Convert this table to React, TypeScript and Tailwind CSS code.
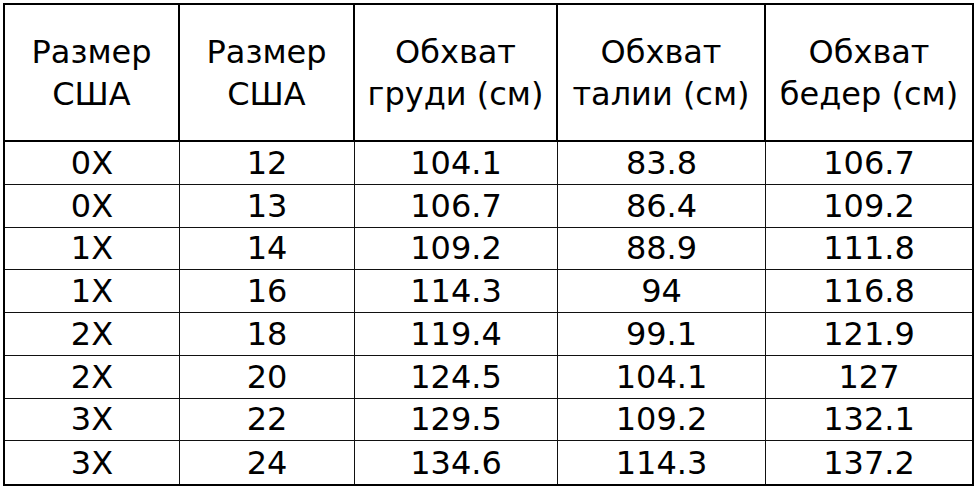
const headers = [
  ["Размер", "США"],
  ["Размер", "США"],
  ["Обхват", "груди (см)"],
  ["Обхват", "талии (см)"],
  ["Обхват", "бедер (см)"],
];

const rows = [
  ["0X", "12", "104.1", "83.8", "106.7"],
  ["0X", "13", "106.7", "86.4", "109.2"],
  ["1X", "14", "109.2", "88.9", "111.8"],
  ["1X", "16", "114.3", "94", "116.8"],
  ["2X", "18", "119.4", "99.1", "121.9"],
  ["2X", "20", "124.5", "104.1", "127"],
  ["3X", "22", "129.5", "109.2", "132.1"],
  ["3X", "24", "134.6", "114.3", "137.2"],
];

export default function App() {
  return (
    <div className="w-[976px] h-[487px] bg-white pl-[3px] pt-[3px] font-['DejaVu_Sans',sans-serif] text-black">
      <div className="w-[971px] h-[483px] border-2 border-black flex flex-col">
        {/* Header */}
        <div className="grid grid-cols-[175px_175px_203px_208px_1fr] h-[138px] border-b-2 border-black">
          {headers.map((h, i) => (
            <div
              key={i}
              className={`flex flex-col items-center justify-center text-[32px] leading-[42px] whitespace-nowrap ${
                i < 4 ? "border-r-2 border-black" : ""
              }`}
            >
              <span>{h[0]}</span>
              <span>{h[1]}</span>
            </div>
          ))}
        </div>

        {/* Body */}
        {rows.map((r, ri) => (
          <div
            key={ri}
            className={`grid grid-cols-[175px_175px_203px_208px_1fr] h-[43px] ${
              ri < rows.length - 1 ? "border-b border-[#111]" : ""
            }`}
          >
            {r.map((c, ci) => (
              <div
                key={ci}
                className={`flex items-center justify-center text-[32px] leading-none ${
                  ci < 4 ? "border-r border-[#111]" : ""
                }`}
              >
                {c}
              </div>
            ))}
          </div>
        ))}
      </div>
    </div>
  );
}
